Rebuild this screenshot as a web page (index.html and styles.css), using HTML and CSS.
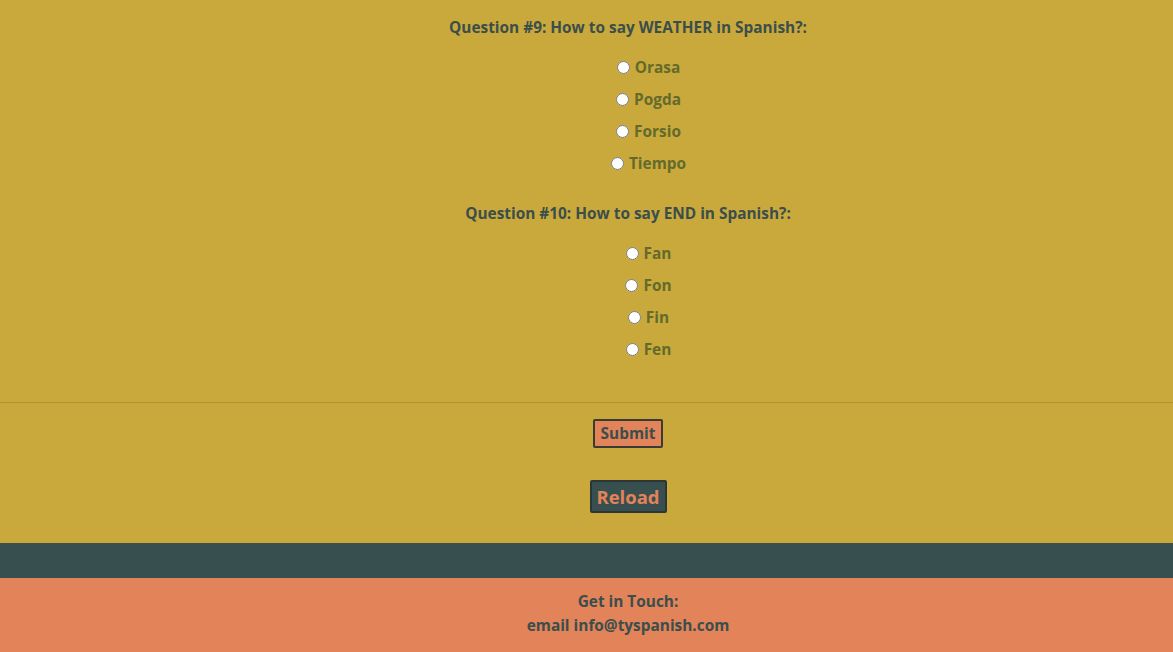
FILE: index.html
```html
<!DOCTYPE html>
<html>
<head>
<meta charset="utf-8">
<link rel="stylesheet" href="styles.css">
</head>
<body>
<main class="quiz">
  <section class="question">
    <h3 class="q-title">Question #9: How to say WEATHER in Spanish?:</h3>
    <div class="option"><input type="radio" name="q9"><label>Orasa</label></div>
    <div class="option"><input type="radio" name="q9"><label>Pogda</label></div>
    <div class="option"><input type="radio" name="q9"><label>Forsio</label></div>
    <div class="option"><input type="radio" name="q9"><label>Tiempo</label></div>
  </section>
  <section class="question">
    <h3 class="q-title">Question #10: How to say END in Spanish?:</h3>
    <div class="option"><input type="radio" name="q10"><label>Fan</label></div>
    <div class="option"><input type="radio" name="q10"><label>Fon</label></div>
    <div class="option"><input type="radio" name="q10"><label>Fin</label></div>
    <div class="option"><input type="radio" name="q10"><label>Fen</label></div>
  </section>
</main>
<hr class="divider">
<div class="actions">
  <button class="btn-submit">Submit</button>
  <button class="btn-reload">Reload</button>
</div>
<div class="band"></div>
<footer class="footer">
  <p>Get in Touch:</p>
  <p>email info@tyspanish.com</p>
</footer>
</body>
</html>
```
FILE: styles.css
```css
html, body {
  margin: 0;
  padding: 0;
}
body {
  background: #c9a93b;
  font-family: "Open Sans", "Noto Sans", sans-serif;
  font-weight: 700;
  color: #3b4e4c;
}
.quiz {
  padding: 17px 0 0 83px;
  text-align: center;
}
.question {
  margin-bottom: 23px;
}
.question:last-child {
  margin-bottom: 0;
}
.q-title {
  margin: 0 0 13px;
  font-size: 15.4px;
  line-height: 22px;
  font-weight: 700;
  color: #3b4e4c;
}
.option {
  height: 32px;
  line-height: 32px;
  font-size: 15.4px;
  color: #646a2b;
  padding-left: 36px;
}
.option input {
  margin: 0 5px 0 5px;
  vertical-align: -1px;
}
.divider {
  margin: 36px 0 0;
  border: 0;
  height: 1px;
  background: #b3952c;
}
.actions {
  padding: 16px 0 30px 83px;
  display: flex;
  flex-direction: column;
  align-items: center;
  gap: 32px;
}
.btn-submit {
  font-family: "Open Sans", "Noto Sans", sans-serif;
  font-weight: 700;
  font-size: 15.4px;
  height: 29px;
  width: 70px;
  padding: 0;
  background: #e2835a;
  color: #3b4e4c;
  border: 2px solid #3b3b36;
  border-radius: 2px;
}
.btn-reload {
  font-family: "Open Sans", "Noto Sans", sans-serif;
  font-weight: 700;
  font-size: 18.5px;
  height: 33px;
  width: 77px;
  padding: 0;
  background: #384f50;
  color: #e2835a;
  border: 2px solid #2d3535;
  border-radius: 2px;
}
.band {
  height: 35px;
  background: #384f50;
}
.footer {
  background: #e2835a;
  padding: 12px 0 14px 83px;
  text-align: center;
  font-size: 15.4px;
  line-height: 24px;
  color: #3b4e4c;
}
.footer p {
  margin: 0;
}
```
